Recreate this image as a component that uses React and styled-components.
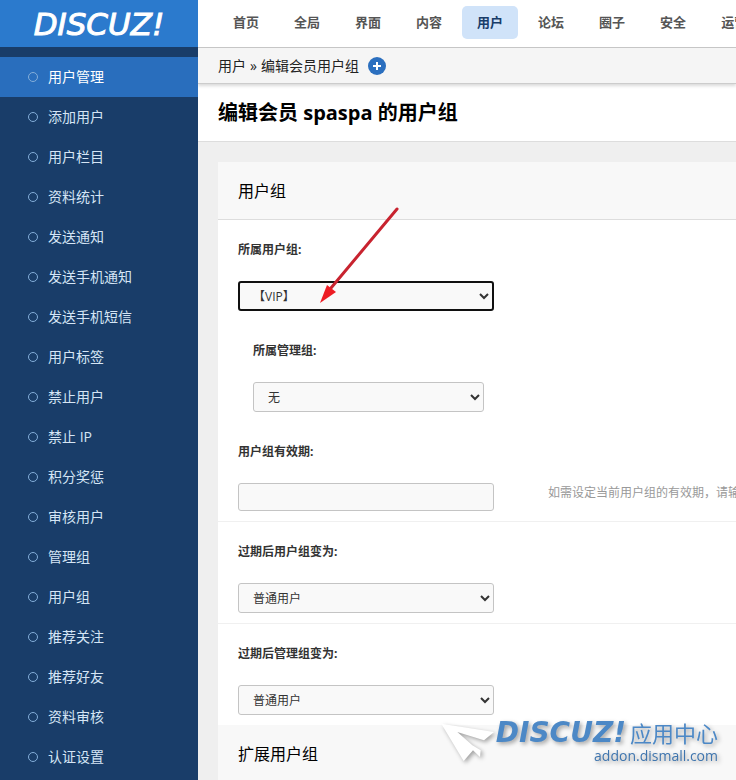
import { useState } from "react";
import styled, { createGlobalStyle } from "styled-components";

const GlobalStyle = createGlobalStyle`
  *, *::before { box-sizing: border-box; }
  body {
    margin: 0;
    background: #efefef;
    color: #333;
    font-family: "Open Sans", "Noto Sans CJK SC", sans-serif;
    font-size: 12px;
    line-height: 20px;
    overflow: hidden;
  }
  h1, h2, ul { margin: 0; padding: 0; }
  ul { list-style: none; }
  a { color: inherit; text-decoration: none; }
`;

const Page = styled.div`
  display: grid;
  grid-template-columns: 198px minmax(0, 1fr);
  min-height: 100vh;
`;

const Sidebar = styled.aside`
  background: #193d69;
`;

const Wordmark = styled.span`
  font-family: "DejaVu Sans", sans-serif;
  font-size: ${(p) => p.$size || 31}px;
  font-style: italic;
  font-weight: ${(p) => p.$weight || 400};
  line-height: 30px;
`;

const Brand = styled.a`
  display: flex;
  align-items: center;
  justify-content: center;
  height: 47px;
  margin-bottom: 10px;
  background: #2b7acd;

  ${Wordmark} {
    color: #fff;
    -webkit-text-stroke: 1px #fff;
  }
`;

const MenuLink = styled.a`
  display: flex;
  align-items: center;
  gap: 10px;
  height: 40px;
  padding-left: 28px;
  background: ${(p) => (p.$active ? "#296ebd" : "transparent")};
  color: ${(p) => (p.$active ? "#fff" : "#d5e5f5")};
  font-size: 14px;

  &::before {
    content: "";
    width: 10px;
    height: 10px;
    border: 1px solid #84aed9;
    border-radius: 50%;
  }
`;

const Main = styled.main`
  overflow: hidden;
`;

const TopNav = styled.nav`
  display: flex;
  align-items: center;
  gap: 5px;
  height: 48px;
  padding: 0 20px 2px;
  border-bottom: 1px solid #c8c8c8;
  background: #fff;
`;

const NavLink = styled.a`
  flex: none;
  padding: 0 15px;
  border-radius: 5px;
  background: ${(p) => (p.$active ? "#d0e3f9" : "transparent")};
  color: ${(p) => (p.$active ? "#193d69" : "#555")};
  font-size: 13px;
  font-weight: 700;
  line-height: 33px;
`;

const Crumbs = styled.div`
  position: relative;
  display: flex;
  align-items: center;
  gap: 4px;
  height: 36px;
  padding: 0 20px;
  border-bottom: 1px solid #ccc;
  background: #f5f5f5;
  box-shadow: 0 2px 3px rgba(0, 0, 0, 0.15);
  color: #222;
  font-size: 14px;
`;

const AddButton = styled.button`
  display: flex;
  align-items: center;
  justify-content: center;
  width: 18px;
  height: 18px;
  margin-left: 5px;
  padding: 0;
  border: 0;
  border-radius: 50%;
  background: #2b6fbf;
`;

const TitleBar = styled.header`
  height: 58px;
  padding: 0 20px;
  border-bottom: 1px solid #ddd;
  background: #fff;

  h1 {
    color: #000;
    font-size: 20px;
    line-height: 58px;
    white-space: nowrap;
  }
`;

const Panel = styled.form`
  margin: 20px 0 0 20px;
  background: #fff;
`;

const SectionTitle = styled.h2`
  height: 58px;
  padding: 0 20px;
  border-bottom: 1px solid #ddd;
  background: #f8f8f8;
  color: #000;
  font-size: 16px;
  font-weight: 400;
  line-height: 58px;
`;

const Row = styled.div`
  display: grid;
  grid-template-columns: 330px minmax(0, 1fr);
  border-bottom: ${(p) => (p.$line ? "1px solid #f0f0f0" : "0")};
`;

const Cell = styled.div`
  display: flex;
  flex-direction: column;
  align-items: flex-start;
  padding: 20px 0 10px ${(p) => (p.$nested ? 35 : 20)}px;
`;

const Label = styled.label`
  margin-bottom: 21px;
  color: #333;
  font-weight: 700;
`;

const Select = styled.select`
  width: ${(p) => (p.$nested ? 231 : 256)}px;
  height: 30px;
  padding: 0 ${(p) => (p.$focused ? 0 : 1)}px 0 ${(p) => (p.$focused ? 9 : 10)}px;
  border: ${(p) => (p.$focused ? "2px solid #101010" : "1px solid #c4c4c4")};
  border-radius: 3px;
  outline: 0;
  background: #f9f9f9;
  color: #333;
  font: inherit;
`;

const TextInput = styled.input`
  width: 256px;
  height: 28px;
  padding: 0 10px;
  border: 1px solid #c4c4c4;
  border-radius: 3px;
  background: #f9f9f9;
  font: inherit;
`;

const Hint = styled.p`
  margin: 0;
  padding-top: 61px;
  overflow: hidden;
  color: #999;
  white-space: nowrap;
`;

const Pointer = styled.svg`
  position: absolute;
  top: 200px;
  left: 310px;
  pointer-events: none;
`;

const Watermark = styled.div`
  position: fixed;
  right: 18px;
  bottom: 16px;
  display: flex;
  align-items: flex-end;
  color: #4c88c6;
  filter: drop-shadow(2px 2px 2px rgba(0, 0, 0, 0.35));
  pointer-events: none;
`;

const WatermarkText = styled.div`
  display: flex;
  flex-direction: column;
  align-items: flex-end;
`;

const WatermarkLine = styled.div`
  display: flex;
  align-items: center;
  gap: 4px;
  font-size: 22px;
  line-height: 30px;
`;

const WatermarkUrl = styled.div`
  color: #3f75ae;
  font-size: 14px;
  line-height: 16px;
`;

const menu = [
  "用户管理", "添加用户", "用户栏目", "资料统计", "发送通知", "发送手机通知",
  "发送手机短信", "用户标签", "禁止用户", "禁止 IP", "积分奖惩", "审核用户",
  "管理组", "用户组", "推荐关注", "推荐好友", "资料审核", "认证设置",
];

const tabs = ["首页", "全局", "界面", "内容", "用户", "论坛", "圈子", "安全", "运营"];

function SelectField({ id, label, option, nested, focused, line }) {
  return (
    <Row $line={line}>
      <Cell $nested={nested}>
        <Label htmlFor={id}>{label}</Label>
        <Select id={id} $nested={nested} $focused={focused}>
          <option>{option}</option>
        </Select>
      </Cell>
    </Row>
  );
}

function App() {
  const [expiry, setExpiry] = useState("");

  return (
    <>
      <GlobalStyle />
      <Page>
        <Sidebar>
          <Brand href="#">
            <Wordmark>DISCUZ!</Wordmark>
          </Brand>
          <ul>
            {menu.map((name, i) => (
              <li key={name}>
                <MenuLink href="#" $active={i === 0}>{name}</MenuLink>
              </li>
            ))}
          </ul>
        </Sidebar>

        <Main>
          <TopNav>
            {tabs.map((name) => (
              <NavLink key={name} href="#" $active={name === "用户"}>{name}</NavLink>
            ))}
          </TopNav>
          <Crumbs>
            <a href="#">用户</a>
            <span>»</span>
            <span>编辑会员用户组</span>
            <AddButton type="button" aria-label="添加">
              <svg width="8" height="8" viewBox="0 0 8 8">
                <path d="M4 0v8M0 4h8" stroke="#fff" strokeWidth="2" />
              </svg>
            </AddButton>
          </Crumbs>
          <TitleBar>
            <h1>编辑会员 spaspa 的用户组</h1>
          </TitleBar>

          <Panel>
            <SectionTitle>用户组</SectionTitle>
            <SelectField id="group" label="所属用户组:" option="【VIP】" focused />
            <SelectField id="admin" label="所属管理组:" option="无" nested />
            <Row $line>
              <Cell>
                <Label htmlFor="expiry">用户组有效期:</Label>
                <TextInput id="expiry" value={expiry} onChange={(e) => setExpiry(e.target.value)} />
              </Cell>
              <Hint>如需设定当前用户组的有效期，请输入用户组截止日期</Hint>
            </Row>
            <SelectField id="groupAfter" label="过期后用户组变为:" option="普通用户" line />
            <SelectField id="adminAfter" label="过期后管理组变为:" option="普通用户" />
            <SectionTitle>扩展用户组</SectionTitle>
          </Panel>
        </Main>
      </Page>

      {/* 红色箭头 */}
      <Pointer width="96" height="110" viewBox="0 0 96 110">
        <path d="M87 9L21 88" stroke="#c8232f" strokeWidth="3" strokeLinecap="round" />
        <path d="M10 103L17 85L26 92Z" fill="#ed1c24" />
      </Pointer>

      <Watermark>
        <svg width="56" height="42" viewBox="26 90 168 126">
          <path
            d="M30 95L188 120L158 145L78 120L123 160L148 175L146 195L125 175L97 207Z"
            fill="#fff"
          />
        </svg>
        <WatermarkText>
          <WatermarkLine>
            <Wordmark $size={28} $weight={700}>DISCUZ!</Wordmark>
            <span>应用中心</span>
          </WatermarkLine>
          <WatermarkUrl>addon.dismall.com</WatermarkUrl>
        </WatermarkText>
      </Watermark>
    </>
  );
}

export default App;
